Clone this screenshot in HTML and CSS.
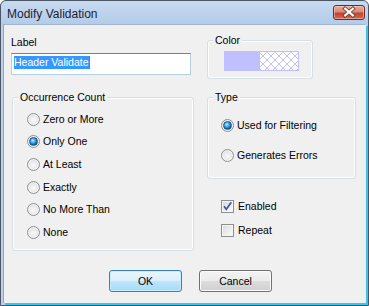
FILE: index.html
```html
<!DOCTYPE html>
<html>
<head>
<meta charset="utf-8">
<link rel="stylesheet" href="styles.css">
</head>
<body>
<div class="window">
  <div class="titlebar">
    <span class="title">Modify Validation</span>
    <span class="close">
      <svg width="31" height="15" viewBox="0 0 31 15">
        <path d="M11.5 3.5 L19.5 10.5 M19.5 3.5 L11.5 10.5" stroke="#6e3b33" stroke-width="4" stroke-linecap="square"/>
        <path d="M11.5 3.5 L19.5 10.5 M19.5 3.5 L11.5 10.5" stroke="#ffffff" stroke-width="2.2" stroke-linecap="square"/>
      </svg>
    </span>
  </div>
  <div class="client">
    <div class="row-top">
      <div class="label-block">
        <div class="label">Label</div>
        <div class="textbox"><span class="sel">Header Validate</span><span class="caret"></span></div>
      </div>
      <fieldset class="group color-group">
        <legend>Color</legend>
        <div class="swatch"><span class="solid"></span><span class="hatch"></span></div>
      </fieldset>
    </div>
    <div class="row-mid">
      <fieldset class="group occ">
        <legend>Occurrence Count</legend>
        <div class="opts">
          <div class="opt"><span class="radio"></span><span>Zero or More</span></div>
          <div class="opt"><span class="radio on"></span><span>Only One</span></div>
          <div class="opt"><span class="radio"></span><span>At Least</span></div>
          <div class="opt"><span class="radio"></span><span>Exactly</span></div>
          <div class="opt"><span class="radio"></span><span>No More Than</span></div>
          <div class="opt"><span class="radio"></span><span>None</span></div>
        </div>
      </fieldset>
      <div class="right-col">
        <fieldset class="group type">
          <legend>Type</legend>
          <div class="type-opts">
            <div class="opt"><span class="radio on"></span><span>Used for Filtering</span></div>
            <div class="opt"><span class="radio"></span><span>Generates Errors</span></div>
          </div>
        </fieldset>
        <div class="checks">
          <div class="chk-row"><span class="check on"><svg width="11" height="11" viewBox="0 0 11 11"><path d="M2 5.2 L4.3 8.3 L9.3 1.3" fill="none" stroke="#3f5a98" stroke-width="1.7"/></svg></span><span>Enabled</span></div>
          <div class="chk-row"><span class="check"></span><span>Repeat</span></div>
        </div>
      </div>
    </div>
    <div class="buttons">
      <button class="btn default">OK</button>
      <button class="btn">Cancel</button>
    </div>
  </div>
</div>
</body>
</html>
```

FILE: styles.css
```css
* { box-sizing: border-box; }
html, body { margin: 0; padding: 0; }
body {
  width: 369px;
  height: 306px;
  overflow: hidden;
  background: #ffffff;
  font-family: "Liberation Sans", Arial, sans-serif;
  font-size: 10.5px;
  color: #000;
}
.window {
  width: 369px;
  height: 306px;
  border: 1px solid #4b5563;
  border-radius: 6px 6px 0 0;
  padding: 0 2px 2px 2px;
  background: linear-gradient(#c7daf0 0, #b3cbe8 24px, #bcd2ec 24px);
  display: flex;
  flex-direction: column;
}
.titlebar {
  height: 23px;
  display: flex;
  justify-content: space-between;
  align-items: flex-start;
}
.title {
  padding: 5px 0 0 4px;
  font-size: 12px;
  line-height: 16px;
  color: #1d1d33;
}
.close {
  margin: 4px 1px 0 0;
  width: 32px;
  height: 15px;
  border: 1px solid #6a2c22;
  border-radius: 3px;
  background: linear-gradient(#e7ab9c 0, #d98a78 45%, #c2452d 55%, #cf6a50 100%);
  box-shadow: inset 0 0 0 1px rgba(255, 220, 210, 0.5);
  display: flex;
  align-items: center;
  justify-content: center;
}
.close svg { display: block; }
.client {
  height: 279px;
  background: #f0f0f0;
  border-top: 1px solid #9fb6d2;
  border-left: 1px solid #8ea6c4;
  border-right: 1px solid #e6edf5;
  box-shadow: 2px 2px 0 #3ec4e8;
}
.row-top {
  display: flex;
  align-items: flex-start;
  padding-top: 9px;
}
.label-block {
  margin-left: 7px;
  width: 180px;
  padding-top: 2px;
}
.label {
  line-height: 13px;
  height: 13px;
  margin-bottom: 4px;
}
.textbox {
  height: 22px;
  background: #fff;
  border: 1px solid #b5cfe7;
  border-top-color: #5d86b0;
  padding: 2px 0 0 2px;
  display: flex;
  align-items: flex-start;
}
.sel {
  background: #3399ff;
  color: #fff;
  height: 13px;
  line-height: 13px;
  font-size: 10.5px;
}
.caret {
  width: 1px;
  height: 13px;
  background: #cc6600;
}
.group {
  margin: 0;
  padding: 0;
  border: 1px solid #d5dfe5;
  border-radius: 3px;
  box-shadow: inset 0 0 0 1px #ffffff;
  min-width: 0;
}
.group legend {
  margin-left: 5px;
  padding: 0 2px;
  line-height: 13px;
  height: 13px;
  background: #f0f0f0;
}
.color-group {
  margin-left: 16px;
  width: 106px;
  height: 45px;
}
.swatch {
  margin: 4px 0 0 16px;
  width: 75px;
  height: 20px;
  background: #c0c0ff;
  display: flex;
}
.solid { width: 36px; height: 20px; }
.hatch {
  flex: 1;
  margin: 1px 1px 1px 0;
  background-color: #ffffff;
  background-image:
    repeating-linear-gradient(45deg, #c0c0ff 0 1px, transparent 1px 5.66px),
    repeating-linear-gradient(-45deg, #c0c0ff 0 1px, transparent 1px 5.66px);
}
.row-mid {
  display: flex;
  align-items: flex-start;
  margin-top: 12px;
}
.occ {
  margin-left: 8px;
  width: 182px;
  height: 160px;
}
.opts {
  padding: 4px 0 0 14px;
}
.opt {
  height: 22.6px;
  display: flex;
  align-items: center;
  line-height: 13px;
}
.opt .radio { margin-right: 3px; }
.radio {
  width: 13px;
  height: 13px;
  border-radius: 50%;
  border: 1px solid #8b9097;
  background: radial-gradient(circle at 50% 55%, #fafafa 0, #ececec 40%, #cfd1d3 100%);
  box-shadow: inset 0 0 0 1px #f6f6f6;
  display: flex;
  align-items: center;
  justify-content: center;
  flex: none;
}
.radio.on::after {
  content: "";
  width: 7px;
  height: 7px;
  border-radius: 50%;
  border: 1px solid #1b4f84;
  background: radial-gradient(circle at 40% 35%, #b9ecff 0, #3aa3e6 40%, #0a5aa6 75%, #083d75 100%);
}
.right-col {
  margin-left: 13px;
  width: 149px;
}
.type {
  width: 149px;
  height: 88px;
}
.type-opts {
  padding: 10px 0 0 13px;
  display: flex;
  flex-direction: column;
  gap: 7px;
}
.type-opts .opt { height: 23px; }
.checks {
  margin-top: 15px;
  padding-left: 14px;
}
.chk-row {
  height: 24px;
  display: flex;
  align-items: center;
  line-height: 13px;
}
.check {
  width: 13px;
  height: 13px;
  border: 1px solid #8e8f8f;
  background: linear-gradient(135deg, #d8d9db 0, #f2f2f2 70%, #fbfbfb 100%);
  box-shadow: inset 0 0 0 1px #f5f5f5;
  margin-right: 4px;
  flex: none;
  display: flex;
  align-items: center;
  justify-content: center;
}
.check svg { display: block; }
.buttons {
  display: flex;
  gap: 17px;
  margin-top: 19px;
  padding-left: 105px;
}
.btn {
  width: 73px;
  height: 22px;
  padding: 0;
  margin: 0;
  font-family: "Liberation Sans", Arial, sans-serif;
  font-size: 10.5px;
  color: #000;
  border: 1px solid #707070;
  border-radius: 3px;
  background: linear-gradient(#f3f3f3 0, #ebebeb 50%, #dddddd 50%, #cfcfcf 100%);
  box-shadow: inset 0 0 0 1px #fcfcfc;
}
.btn.default {
  border-color: #3c7fb1;
  background: linear-gradient(#eaf6fd 0, #d9f0fc 50%, #bee6fd 50%, #a7d9f5 100%);
  box-shadow: inset 0 0 0 1px #c8ecfc;
}
```
